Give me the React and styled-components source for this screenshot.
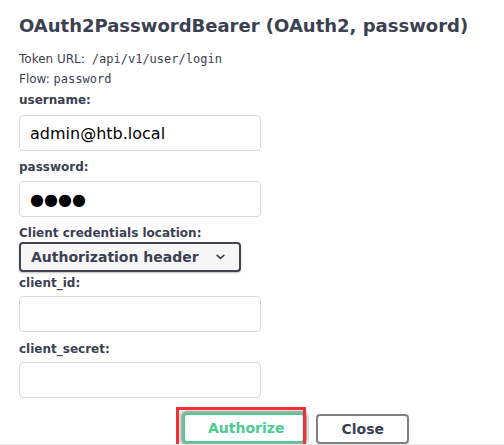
import React from "react";
import styled, { createGlobalStyle } from "styled-components";

const GlobalStyle = createGlobalStyle`
  html, body {
    margin: 0;
    padding: 0;
    background: #fff;
  }
  body {
    font-family: "DejaVu Sans", sans-serif;
    color: #3b4151;
  }
`;

const Page = styled.div`
  box-sizing: border-box;
  height: 445px;
  overflow: hidden;
  padding: 15px 0 0 19px;
  border-bottom: 1px solid #e8e8e8;
`;

const Title = styled.h4`
  margin: 0 0 12px;
  font-size: 18px;
  line-height: 22px;
  font-weight: 700;
  color: #3b4151;
`;

const Info = styled.p`
  margin: 0;
  font-size: 12px;
  line-height: 20px;
  color: #3b4151;
`;

const Code = styled.code`
  font-family: "DejaVu Sans Mono", monospace;
  font-size: 12px;
  margin-left: ${(p) => (p.$spaced ? "7px" : "0")};
`;

const Label = styled.label`
  display: block;
  font-size: 12px;
  line-height: 14px;
  font-weight: 700;
  color: #3b4151;
  margin-top: ${(p) => p.$top}px;
  margin-bottom: ${(p) => p.$bottom}px;
`;

const Input = styled.input`
  display: block;
  box-sizing: border-box;
  width: 242px;
  height: 36px;
  margin: 0;
  padding: 0 10px;
  border: 1px solid #d9d9d9;
  border-radius: 4px;
  background: #fff;
  font-family: "DejaVu Sans", sans-serif;
  font-size: 16px;
  color: #000;
  outline: none;
`;

const Select = styled.div`
  box-sizing: border-box;
  display: flex;
  align-items: center;
  width: 222px;
  height: 30px;
  padding: 5px 14px 5px 10px;
  border: 2px solid #41444e;
  border-radius: 4px;
  background: #f7f7f7;
  box-shadow: 0 1px 2px 0 rgba(0, 0, 0, 0.25);
  font-size: 14px;
  line-height: 16px;
  font-weight: 700;
  color: #3b4151;

  svg {
    margin-left: auto;
  }
`;

const Buttons = styled.div`
  display: flex;
  align-items: flex-start;
  gap: 11px;
  margin-top: 15px;
  padding-left: 164px;
`;

const Highlight = styled.span`
  position: relative;
  display: inline-block;

  &::after {
    content: "";
    position: absolute;
    left: -7px;
    top: -6px;
    width: 130px;
    height: 60px;
    box-sizing: border-box;
    border: 3px solid #f03232;
    pointer-events: none;
  }
`;

const Button = styled.button`
  box-sizing: border-box;
  height: 30px;
  margin-top: ${(p) => (p.$shift ? "1px" : "0")};
  padding: 5px ${(p) => (p.$narrow ? "19px" : "23px")} 5px 23px;
  border: 2px solid ${(p) => p.$color};
  border-radius: 4px;
  background: #fff;
  font-family: "DejaVu Sans", sans-serif;
  font-size: 14px;
  line-height: 16px;
  font-weight: 700;
  color: ${(p) => p.$text};
  box-shadow: ${(p) =>
    p.$focus
      ? "0 0 0 2px #a9a9a9, 0 0 0 4px #dcdcdc"
      : "0 1px 2px rgba(0, 0, 0, 0.1)"};
  cursor: pointer;
`;

function Chevron() {
  return (
    <svg width="9" height="6" viewBox="0 0 9 6">
      <path
        d="M1.2 1.4 L4.5 4.4 L7.8 1.4"
        fill="none"
        stroke="#3b4151"
        strokeWidth="1.7"
        strokeLinecap="round"
        strokeLinejoin="round"
      />
    </svg>
  );
}

export default function App() {
  return (
    <>
      <GlobalStyle />
      <Page>
        <Title>OAuth2PasswordBearer (OAuth2, password)</Title>
        <Info>
          Token URL:<Code $spaced>/api/v1/user/login</Code>
        </Info>
        <Info>
          Flow: <Code>password</Code>
        </Info>

        <Label $top={4} $bottom={8}>username:</Label>
        <Input type="text" defaultValue="admin@htb.local" />

        <Label $top={9} $bottom={7}>password:</Label>
        <Input type="text" readOnly value="●●●●" />

        <Label $top={9} $bottom={2}>Client credentials location:</Label>
        <Select>
          Authorization header
          <Chevron />
        </Select>

        <Label $top={4} $bottom={6}>client_id:</Label>
        <Input type="text" />

        <Label $top={10} $bottom={6}>client_secret:</Label>
        <Input type="password" />

        <Buttons>
          <Highlight>
            <Button $color="#49cc90" $text="#49cc90" $focus $narrow>
              Authorize
            </Button>
          </Highlight>
          <Button $color="#808080" $text="#3b4151" $shift>
            Close
          </Button>
        </Buttons>
      </Page>
    </>
  );
}
